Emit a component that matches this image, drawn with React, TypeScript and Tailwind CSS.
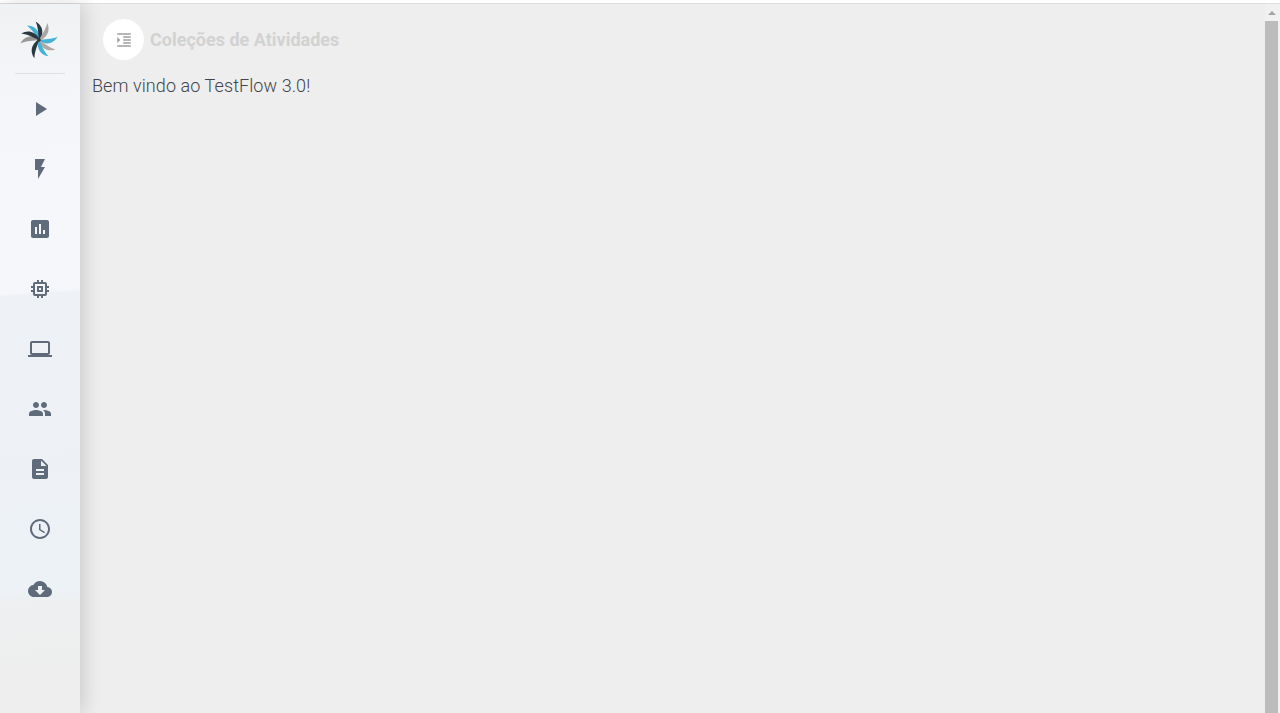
import React from 'react';
import {
  MdPlayArrow,
  MdFlashOn,
  MdAssessment,
  MdMemory,
  MdLaptop,
  MdPeople,
  MdDescription,
  MdAccessTime,
  MdCloudDownload,
  MdFormatIndentIncrease,
} from 'react-icons/md';

const navItems = [
  { icon: MdPlayArrow, name: 'play' },
  { icon: MdFlashOn, name: 'flash' },
  { icon: MdAssessment, name: 'assessment' },
  { icon: MdMemory, name: 'memory' },
  { icon: MdLaptop, name: 'laptop' },
  { icon: MdPeople, name: 'people' },
  { icon: MdDescription, name: 'description' },
  { icon: MdAccessTime, name: 'time' },
  { icon: MdCloudDownload, name: 'cloud' },
];

// blades of the logo, clockwise from the top left
const blades = [
  { angle: -38, color: '#45b2d6' },
  { angle: -8, color: '#2a3841' },
  { angle: 28, color: '#aaa5a1' },
  { angle: 82, color: '#45b2d6' },
  { angle: 122, color: '#b0aaa5' },
  { angle: 152, color: '#45b2d6' },
  { angle: 196, color: '#2a3841' },
  { angle: 262, color: '#989898' },
  { angle: 292, color: '#2a3841' },
];

function Logo() {
  return (
    <svg width="38" height="38" viewBox="-19 -19 38 38" className="mt-[3px] mr-[2px]">
      {blades.map((blade, i) => (
        <path
          key={i}
          d="M0 0 C-3 -5 -5 -11 -10 -16 C-3 -15 2 -10 1 -1 Z"
          fill={blade.color}
          transform={`rotate(${blade.angle + 30})`}
        />
      ))}
      <circle r="1.8" fill="#2a3841" />
    </svg>
  );
}

function Sidebar() {
  return (
    <aside className="w-[80px] h-full shrink-0 flex flex-col items-center z-10 shadow-[4px_0_18px_rgba(0,0,0,0.15)] bg-[linear-gradient(176deg,#f0f1f2_0%,#f3f5f8_10%,#f5f7fb_30%,#f5f7fb_40.6%,#eef1f5_41%,#edf1f5_65%,#edf2f7_82%,#eeeff0_84.5%,#eeeeee_100%)]">
      <div className="w-[50px] h-[70px] shrink-0 flex items-center justify-center border-b border-[#dfdfdf]">
        <Logo />
      </div>
      <nav className="flex flex-col items-center pt-[5px]">
        {navItems.map(({ icon: Icon, name }) => (
          <div key={name} className="h-[60px] w-[60px] flex items-center justify-center">
            <Icon size={24} className="text-[#5f6b7a]" />
          </div>
        ))}
      </nav>
    </aside>
  );
}

export default function App() {
  return (
    <div className="h-[713px] w-[1280px] overflow-hidden flex flex-col bg-white font-['Roboto',sans-serif]">
      <div className="h-[4px] shrink-0 border-b border-[#dddddd] bg-white" />
      <div className="flex flex-1 min-h-0 bg-[#eeeeee]">
        <Sidebar />
        <main className="flex-1 min-w-0 pl-[12px]">
          <div className="flex items-center gap-[6px] pl-[11px] pt-[15px]">
            <div className="w-[41px] h-[41px] rounded-full bg-white flex items-center justify-center">
              <MdFormatIndentIncrease size={18} className="text-[#9e9e9e]" />
            </div>
            <h1 className="text-[18px] font-bold text-[#d2d2d2]">Coleções de Atividades</h1>
          </div>
          <p className="mt-[12px] text-[18px] leading-[27px] tracking-[0.08px] font-light text-[#42454c]">Bem vindo ao TestFlow 3.0!</p>
        </main>
        <div className="w-[15px] shrink-0 flex flex-col bg-[#f1f1f1]">
          <div className="h-[17px] shrink-0 flex items-center justify-center pr-[2px]">
            <div className="w-0 h-0 mt-[1px] border-l-[4px] border-r-[4px] border-b-[4px] border-l-transparent border-r-transparent border-b-[#a3a3a3]" />
          </div>
          <div className="flex-1 w-[13px] bg-[#bcbcbc]" />
        </div>
      </div>
    </div>
  );
}
